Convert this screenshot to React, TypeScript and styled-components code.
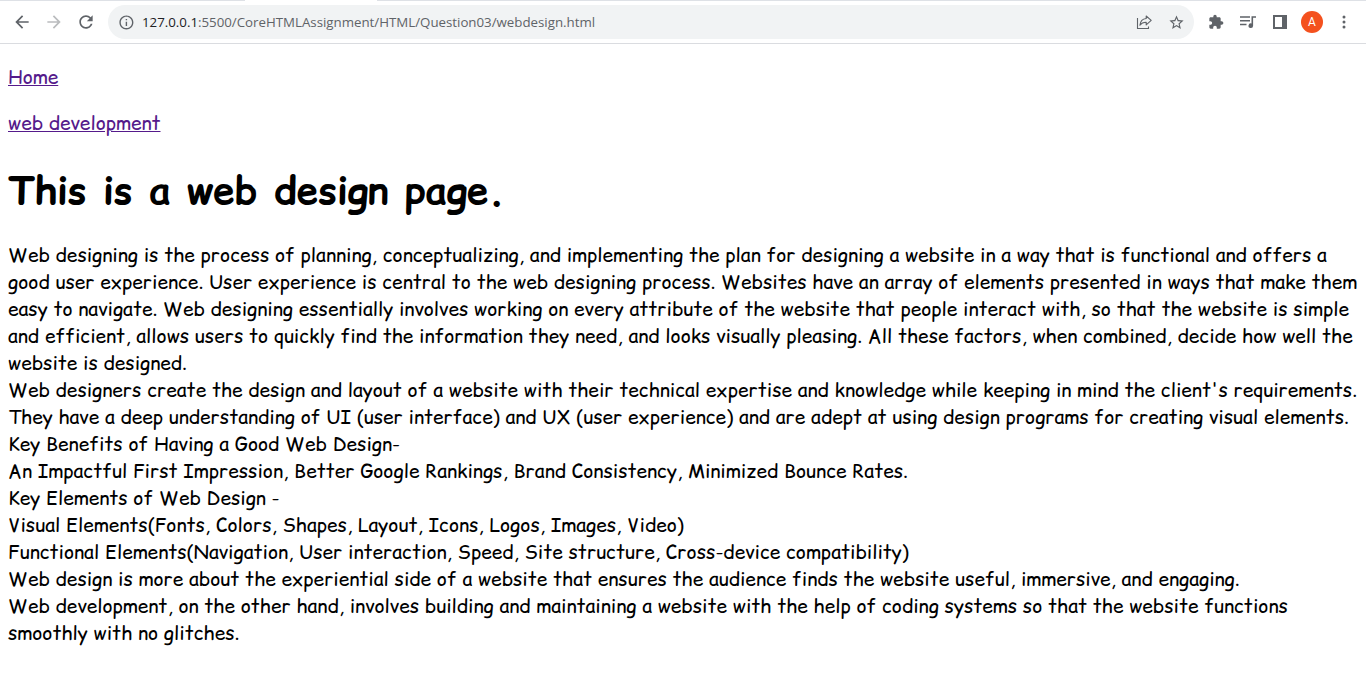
import React from "react";
import styled, { createGlobalStyle } from "styled-components";

const GlobalStyle = createGlobalStyle`
  body {
    margin: 0;
    background: #fff;
    overflow: hidden;
  }
`;

const TabEdge = styled.div`
  display: flex;
  justify-content: space-between;
  height: 1px;
`;

const TabEdgeSegment = styled.div<{ $width: number }>`
  width: ${({ $width }) => $width}px;
  background: #dee1e6;
`;

const Toolbar = styled.header`
  display: flex;
  align-items: center;
  box-sizing: border-box;
  height: 43px;
  padding: 0 6px;
  border-bottom: 1px solid #dadce0;
  color: #5f6368;
`;

const ToolButton = styled.button<{ $faded?: boolean }>`
  display: flex;
  align-items: center;
  justify-content: center;
  flex: none;
  width: 32px;
  height: 32px;
  padding: 0;
  border: 0;
  background: none;
  color: ${({ $faded }) => ($faded ? "#babcbe" : "#5f6368")};
`;

const AddressBar = styled.div`
  display: flex;
  align-items: center;
  flex: 1;
  box-sizing: border-box;
  height: 34px;
  margin: 0 6px;
  padding: 0 2px 0 10px;
  border-radius: 17px;
  background: #f1f3f4;
`;

const Url = styled.div`
  flex: 1;
  margin-left: 7.2px;
  font: 13.3px/20px "Open Sans", "Noto Sans", sans-serif;
  letter-spacing: -0.01px;
  white-space: nowrap;
`;

const Host = styled.span`
  color: #202124;
`;

const Avatar = styled.div`
  display: flex;
  align-items: center;
  justify-content: center;
  width: 22px;
  height: 22px;
  border-radius: 50%;
  background: #f4511e;
  color: #fff;
  font: 12px/22px Roboto, sans-serif;
`;

const Page = styled.main`
  padding: 0.6px 8px 0;
  font: 19.2px/27px "Comic Sans MS", "Comic Relief", "Comic Neue", "Open Sans", sans-serif;
  color: #000;
`;

const LinkRow = styled.p`
  margin: 19.2px 0;
`;

const PageLink = styled.a`
  color: #551a8b;
  text-decoration: underline;
`;

const Title = styled.h1`
  margin: 25.9px 0 24.9px;
  font-size: 38.4px;
  line-height: 54px;
`;

const Body = styled.div`
  width: 1350px;
  letter-spacing: 0.005px;
`;

type IconProps = { size?: number; children: React.ReactNode };

const Icon = ({ size = 20, children }: IconProps) => (
  <svg width={size} height={size} viewBox="0 0 24 24" fill="currentColor" aria-hidden="true">
    {children}
  </svg>
);

const paragraphs = [
  "Web designing is the process of planning, conceptualizing, and implementing the plan for designing a website in a way that is functional and offers a good user experience. User experience is central to the web designing process. Websites have an array of elements presented in ways that make them easy to navigate. Web designing essentially involves working on every attribute of the website that people interact with, so that the website is simple and efficient, allows users to quickly find the information they need, and looks visually pleasing. All these factors, when combined, decide how well the website is designed.",
  "Web designers create the design and layout of a website with their technical expertise and knowledge while keeping in mind the client's requirements. They have a deep understanding of UI (user interface) and UX (user experience) and are adept at using design programs for creating visual elements.",
  "Key Benefits of Having a Good Web Design-",
  "An Impactful First Impression, Better Google Rankings, Brand Consistency, Minimized Bounce Rates.",
  "Key Elements of Web Design -",
  "Visual Elements(Fonts, Colors, Shapes, Layout, Icons, Logos, Images, Video)",
  "Functional Elements(Navigation, User interaction, Speed, Site structure, Cross-device compatibility)",
  "Web design is more about the experiential side of a website that ensures the audience finds the website useful, immersive, and engaging.",
  "Web development, on the other hand, involves building and maintaining a website with the help of coding systems so that the website functions smoothly with no glitches.",
];

export default function App() {
  return (
    <>
      <GlobalStyle />
      <TabEdge>
        <TabEdgeSegment $width={245} />
        <TabEdgeSegment $width={989} />
      </TabEdge>
      <Toolbar>
        <ToolButton aria-label="Back">
          <Icon>
            <path d="M20 11H7.83l5.59-5.59L12 4l-8 8 8 8 1.41-1.41L7.83 13H20v-2z" />
          </Icon>
        </ToolButton>
        <ToolButton aria-label="Forward" $faded>
          <Icon>
            <path d="M12 4l-1.41 1.41L16.17 11H4v2h12.17l-5.58 5.59L12 20l8-8z" />
          </Icon>
        </ToolButton>
        <ToolButton aria-label="Reload">
          <Icon>
            <path d="M17.65 6.35C16.2 4.9 14.21 4 12 4c-4.42 0-7.99 3.58-7.99 8s3.57 8 7.99 8c3.73 0 6.84-2.55 7.73-6h-2.08c-.82 2.33-3.04 4-5.65 4-3.31 0-6-2.69-6-6s2.69-6 6-6c1.66 0 3.14.69 4.22 1.78L13 11h7V4l-2.35 2.35z" />
          </Icon>
        </ToolButton>
        <AddressBar>
          <Icon size={16.8}>
            <path d="M11 7h2v2h-2zm0 4h2v6h-2zm1-9C6.48 2 2 6.48 2 12s4.48 10 10 10 10-4.48 10-10S17.52 2 12 2zm0 18c-4.41 0-8-3.59-8-8s3.59-8 8-8 8 3.59 8 8-3.59 8-8 8z" />
          </Icon>
          <Url>
            <Host>127.0.0.1</Host>:5500/CoreHTMLAssignment/HTML/Question03/webdesign.html
          </Url>
          <ToolButton aria-label="Share">
            <svg width="16" height="16" viewBox="0 0 16 16" fill="none" stroke="currentColor" strokeWidth="1.1" aria-hidden="true">
              <path d="M1.5 4v10.5h11V12.5" />
              <path d="M10.2 2l5 4.4-5 4.4V8.3C7.4 8.2 5.5 9 3.9 11.2 4.3 7.6 6.5 4.9 10.2 4.5z" strokeLinejoin="round" />
            </svg>
          </ToolButton>
          <ToolButton aria-label="Bookmark">
            <Icon size={17}>
              <path d="M22 9.24l-7.19-.62L12 2 9.19 8.63 2 9.24l5.46 4.73L5.82 21 12 17.27 18.18 21l-1.63-7.03L22 9.24zM12 15.4l-3.76 2.27 1-4.28-3.32-2.88 4.38-.38L12 6.1l1.71 4.04 4.38.38-3.32 2.88 1 4.28L12 15.4z" />
            </Icon>
          </ToolButton>
        </AddressBar>
        <ToolButton aria-label="Extensions">
          <Icon size={16}>
            <path d="M20.5 11H19V7c0-1.1-.9-2-2-2h-4V3.5C13 2.12 11.88 1 10.5 1S8 2.12 8 3.5V5H4c-1.1 0-1.99.9-1.99 2v3.8H3.5c1.49 0 2.7 1.21 2.7 2.7s-1.21 2.7-2.7 2.7H2V20c0 1.1.9 2 2 2h3.8v-1.5c0-1.49 1.21-2.7 2.7-2.7 1.49 0 2.7 1.21 2.7 2.7V22H17c1.1 0 2-.9 2-2v-4h1.5c1.38 0 2.5-1.12 2.5-2.5S21.88 11 20.5 11z" />
          </Icon>
        </ToolButton>
        <ToolButton aria-label="Media controls">
          <svg width="16" height="14" viewBox="0 0 16 14" fill="currentColor" aria-hidden="true">
            <path d="M0 1.2h10v1.5H0zM0 5h10v1.5H0zM0 8.8h6.5v1.5H0zM11.5 1.2H16v1.6h-2.9v7.9a2.3 2.3 0 1 1-1.6-2.2z" />
          </svg>
        </ToolButton>
        <ToolButton aria-label="Side panel">
          <svg width="14" height="14" viewBox="0 0 14 14" aria-hidden="true">
            <path fill="currentColor" fillRule="evenodd" d="M0 0h14v14H0zM2 2v10h7V2z" />
          </svg>
        </ToolButton>
        <ToolButton aria-label="Profile">
          <Avatar>A</Avatar>
        </ToolButton>
        <ToolButton aria-label="Menu">
          <svg width="4" height="14" viewBox="0 0 4 14" fill="currentColor" aria-hidden="true">
            <circle cx="2" cy="2" r="1.5" />
            <circle cx="2" cy="7" r="1.5" />
            <circle cx="2" cy="12" r="1.5" />
          </svg>
        </ToolButton>
      </Toolbar>
      <Page>
        <LinkRow>
          <PageLink>Home</PageLink>
        </LinkRow>
        <LinkRow>
          <PageLink>web development</PageLink>
        </LinkRow>
        <Title>This is a web design page.</Title>
        <Body>
          {paragraphs.map((text) => (
            <div key={text}>{text}</div>
          ))}
        </Body>
      </Page>
    </>
  );
}
